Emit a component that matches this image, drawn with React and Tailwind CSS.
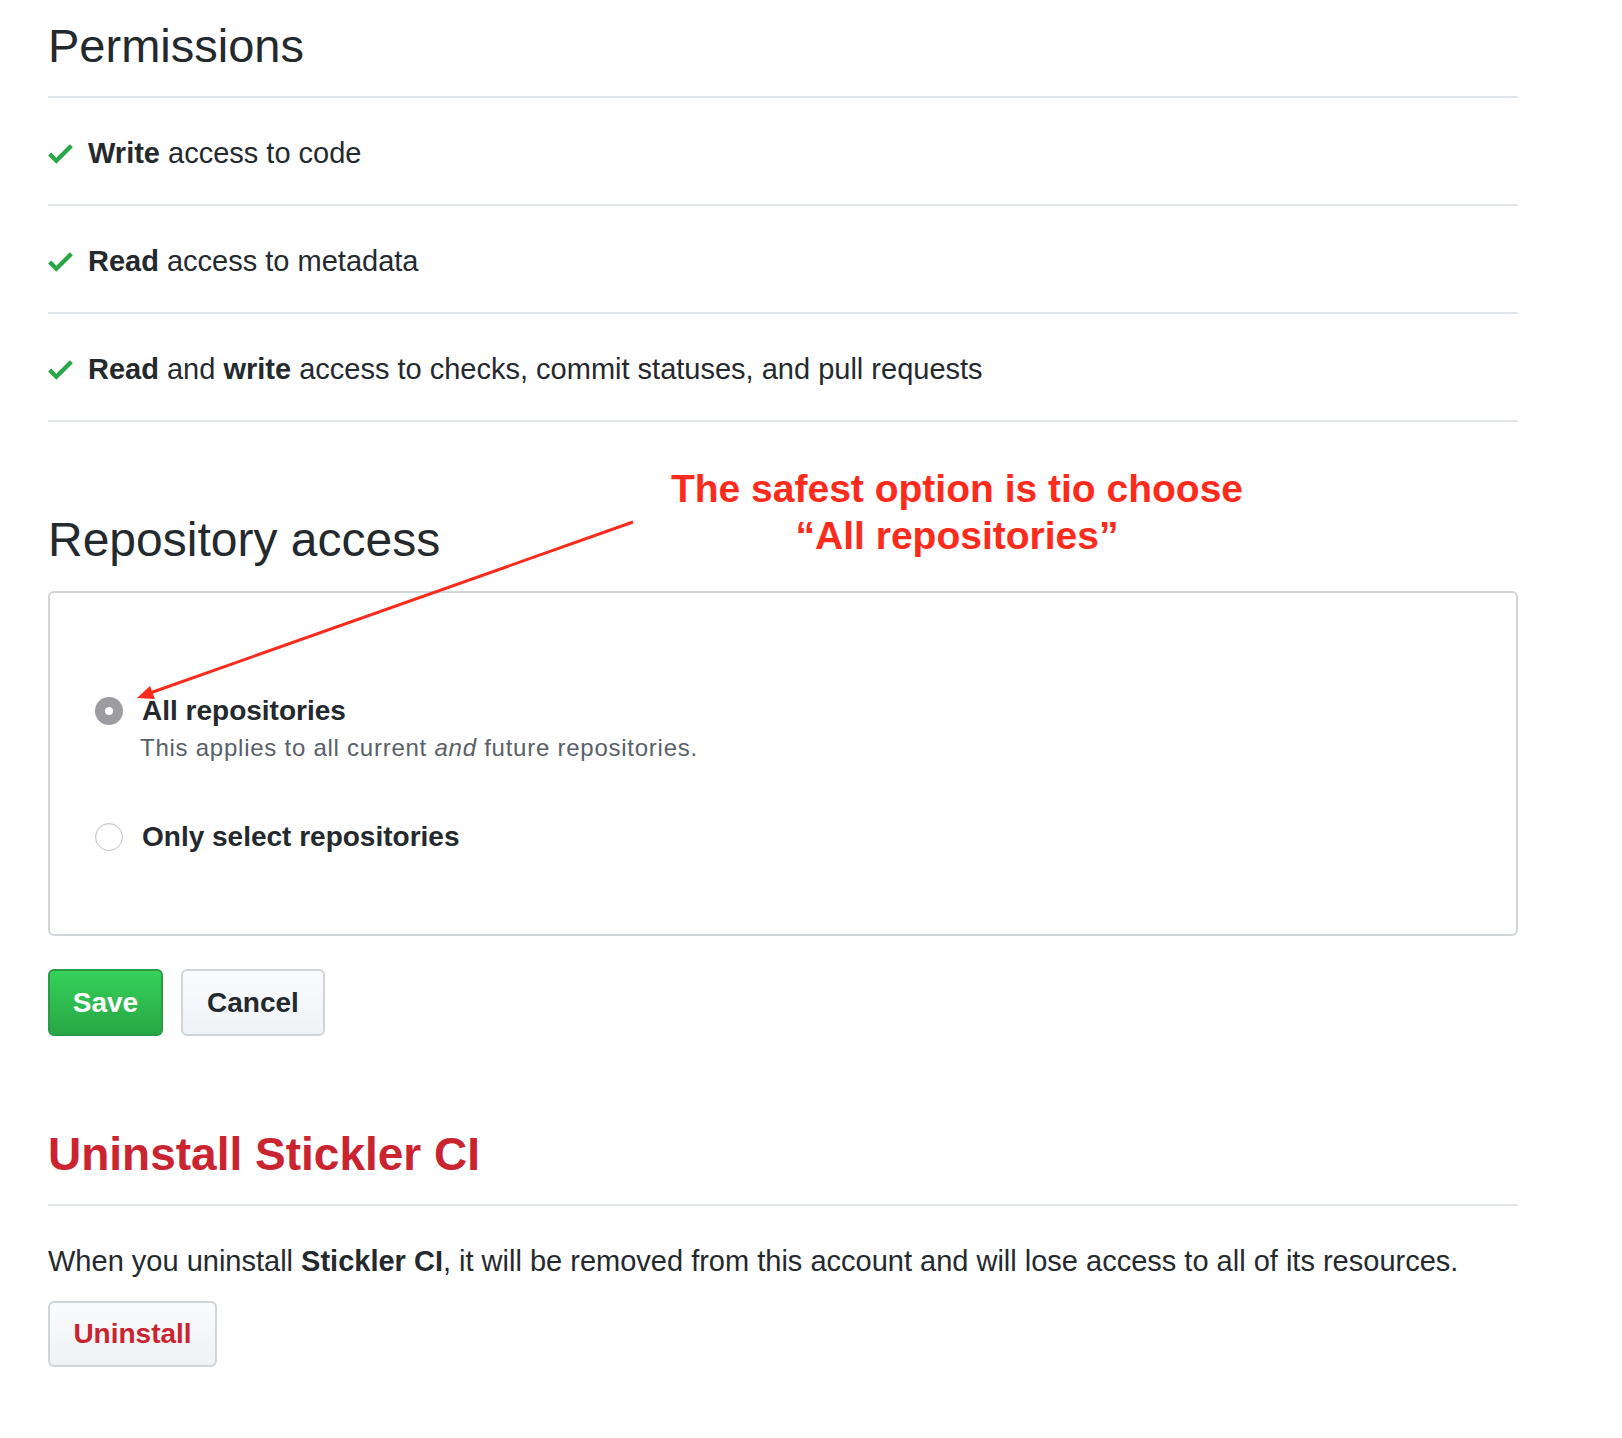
import React from 'react'

function Check() {
  return (
    <svg width="25" height="33" viewBox="0 0 12 16" className="shrink-0">
      <path fill="#28a745" d="M12 5l-8 8-4-4 1.5-1.5L4 10l6.5-6.5L12 5z" />
    </svg>
  )
}

function Row({ children }) {
  return (
    <div className="flex items-center gap-[15px] h-[108px] pt-[4px] border-b-2 border-[#e1e4e8] text-[29px] leading-[40px]">
      <Check />
      <span>{children}</span>
    </div>
  )
}

export default function App() {
  return (
    <div className="relative w-[1622px] min-h-[1438px] bg-white text-[#24292e] font-['Liberation_Sans',Arial,sans-serif]">
      <div className="ml-[48px] w-[1470px] pt-[18px]">
        <h2 className="text-[47px] leading-[56px] font-normal pb-[22px] border-b-2 border-[#e1e4e8]">
          Permissions
        </h2>
        <Row>
          <b>Write</b> access to code
        </Row>
        <Row>
          <b>Read</b> access to metadata
        </Row>
        <Row>
          <b>Read</b> and <b>write</b> access to checks, commit statuses, and pull requests
        </Row>

        <h2 className="mt-[90px] text-[48px] leading-[56px] font-normal">Repository access</h2>

        <div className="mt-[23px] border-2 border-[#d1d5da] rounded-[6px] pt-[100px] pb-[79px] pl-[45px]">
          <div className="flex items-center gap-[19px]">
            <div className="w-[28px] h-[28px] rounded-full bg-[#9c9ca1] flex items-center justify-center">
              <div className="w-[8px] h-[8px] rounded-full bg-white" />
            </div>
            <span className="text-[28px] leading-[36px] font-bold">All repositories</span>
          </div>
          <p className="mt-[3px] pl-[45px] text-[24px] leading-[32px] tracking-[0.75px] text-[#586069]">
            This applies to all current <i>and</i> future repositories.
          </p>
          <div className="mt-[55px] flex items-center gap-[19px]">
            <div className="w-[28px] h-[28px] rounded-full bg-white border-[1.5px] border-[#c2c2c2] shadow-[inset_0_1px_2px_rgba(0,0,0,0.08)]" />
            <span className="text-[28px] leading-[36px] font-bold">Only select repositories</span>
          </div>
        </div>

        <div className="mt-[33px] flex gap-[18px]">
          <button className="w-[115px] h-[67px] rounded-[6px] border-2 border-[#2a9a45] bg-gradient-to-b from-[#36d15a] to-[#28a745] text-white text-[28px] font-bold">
            Save
          </button>
          <button className="w-[144px] h-[67px] rounded-[6px] border-2 border-[#d1d5da] bg-gradient-to-b from-[#fafbfc] to-[#eff3f6] text-[#24292e] text-[28px] font-bold">
            Cancel
          </button>
        </div>

        <h2 className="mt-[90px] text-[46px] leading-[56px] font-bold text-[#cb2431] pb-[22px] border-b-2 border-[#e1e4e8]">
          Uninstall Stickler CI
        </h2>
        <p className="mt-[35px] text-[29px] leading-[40px]">
          When you uninstall <b>Stickler CI</b>, it will be removed from this account and will lose access to all of its resources.
        </p>
        <button className="mt-[20px] w-[169px] h-[66px] rounded-[6px] border-2 border-[#d1d5da] bg-gradient-to-b from-[#fafbfc] to-[#eff3f6] text-[#cb2431] text-[28px] font-bold">
          Uninstall
        </button>
      </div>

      {/* annotation overlay */}
      <div className="absolute left-[657px] top-[465px] w-[600px] text-center text-[39px] leading-[47px] font-bold text-[#fc2b1c]">
        <div>The safest option is tio choose</div>
        <div>“All repositories”</div>
      </div>
      <svg className="absolute left-0 top-0 pointer-events-none" width="1622" height="1438">
        <line x1="633" y1="522" x2="150" y2="693" stroke="#fc2b1c" strokeWidth="3" />
        <polygon points="137,698 155,699 150,686" fill="#fc2b1c" />
      </svg>
    </div>
  )
}
